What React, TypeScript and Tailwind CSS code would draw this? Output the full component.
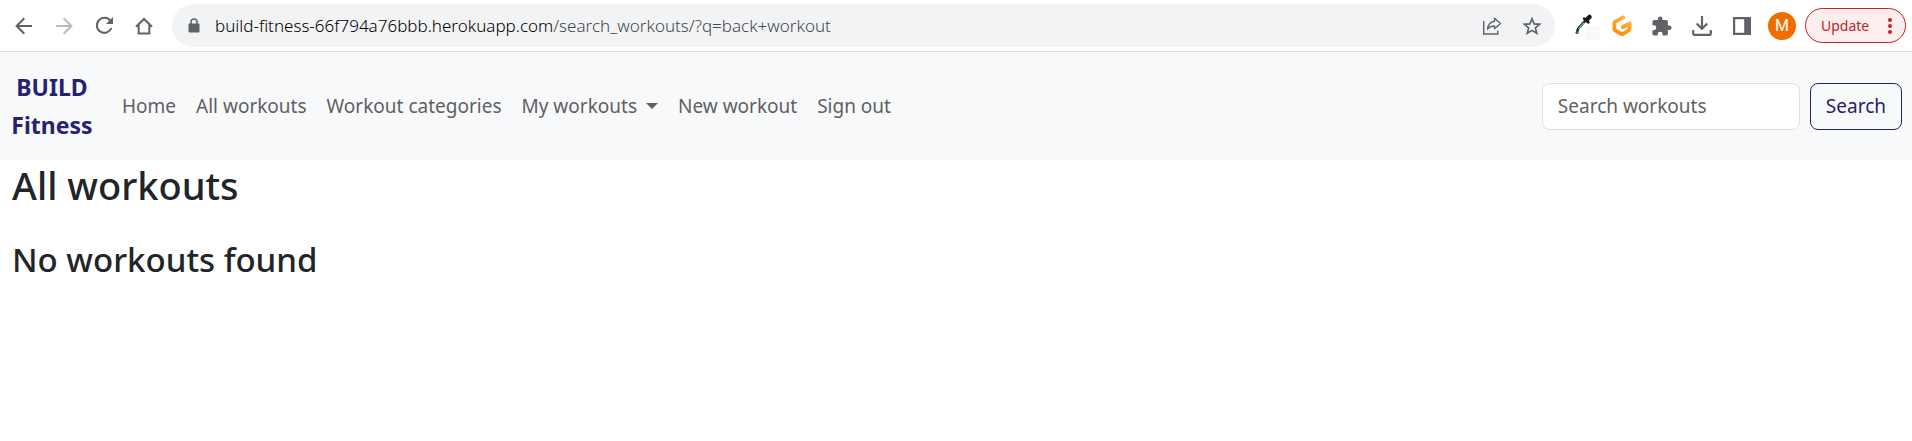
import React from 'react';

const navItems = ['Home', 'All workouts', 'Workout categories', 'My workouts', 'New workout', 'Sign out'];

function IconButton({ label, children }: { label: string; children: React.ReactNode }) {
  return (
    <button type="button" aria-label={label} className="flex h-10 w-10 shrink-0 items-center justify-center">
      {children}
    </button>
  );
}

function BrowserBar() {
  return (
    <header className="flex h-[52px] items-center border-b border-[#dadce0] bg-white pr-[6px] pl-1 text-[#5f6368]">
      <IconButton label="Back">
        <svg width="18" height="18" viewBox="0 0 18 18" fill="none" stroke="currentColor" strokeWidth="2">
          <path d="M17 9H2M9.300 1.300 1.600 9l7.700 7.700" />
        </svg>
      </IconButton>
      <IconButton label="Forward">
        <svg width="18" height="18" viewBox="0 0 18 18" fill="none" stroke="#babcbe" strokeWidth="2">
          <path d="M1 9h15M8.700 1.300 16.400 9l-7.700 7.700" />
        </svg>
      </IconButton>
      <IconButton label="Reload">
        <svg width="20" height="20" viewBox="0 0 20 20" fill="none" stroke="currentColor" strokeWidth="2">
          <path d="M16.500 5A7.500 7.500 0 1 0 17.400 12" />
          <path d="M19 1v7h-7z" fill="currentColor" stroke="none" />
        </svg>
      </IconButton>
      <IconButton label="Home page">
        <svg width="18" height="18" viewBox="0 0 18 18" fill="none" stroke="currentColor" strokeWidth="2">
          <path d="M1 9.800 9 2l8 7.800M3.700 8V16.500h10.600V8" />
        </svg>
      </IconButton>
      <div className="ml-2 flex h-[43px] min-w-0 flex-1 items-center rounded-full bg-[#f1f3f4] pr-[3px] pl-4">
        <svg width="12" height="15" viewBox="0 0 12 15" className="shrink-0">
          <path d="M3 6V4a3 3 0 0 1 6 0v2" fill="none" stroke="currentColor" strokeWidth="1.500" />
          <rect x="0.500" y="5.500" width="11" height="9" rx="1" fill="currentColor" />
        </svg>
        <p className="ml-[15px] min-w-0 flex-1 truncate text-[17px] font-light text-[#45484c]">
          <span className="text-black">build-fitness-66f794a76bbb.herokuapp.com</span>/search_workouts/?q=back+workout
        </p>
        <IconButton label="Share this page">
          <svg width="20" height="20" viewBox="0 0 20 20" fill="none" stroke="currentColor" strokeWidth="1.400">
            <path d="M1.700 5v13h14v-3.500" />
            <path d="M12.500 2.200 18.500 7.500l-6 5.300V10c-3.500 0-5.500 1-7 3.200.5-4.500 3-7.200 7-7.900z" strokeLinejoin="round" />
          </svg>
        </IconButton>
        <IconButton label="Bookmark this tab">
          <svg width="20" height="20" viewBox="0 0 20 20" fill="none" stroke="currentColor" strokeWidth="1.700">
            <path d="m10 2.800 2.100 5.100 5.500.4-4.200 3.600 1.300 5.400-4.700-2.900-4.700 2.900 1.300-5.400-4.200-3.600 5.500-.4z" />
          </svg>
        </IconButton>
      </div>
      <div className="ml-[7px] flex items-center">
        <IconButton label="Color picker">
          <svg width="36" height="28" viewBox="-10 0 36 28">
            <rect x="11" y="14" width="15" height="14" rx="2" fill="#f8f9fb" />
            <path d="m10.500 9.500-6.500 7.500-1 3.500" fill="none" stroke="#1d2b22" strokeWidth="2.600" strokeLinecap="round" />
            <path d="m10 10.500-5.500 6.500" stroke="#69b37b" strokeWidth="1.200" />
            <path d="m10 6.500 4.500 4" stroke="#15191b" strokeWidth="2.500" strokeLinecap="round" />
            <path d="m12.500 8 3-3" stroke="#15191b" strokeWidth="4.500" strokeLinecap="round" />
            <circle cx="3" cy="20.500" r="1.500" fill="#347849" />
          </svg>
        </IconButton>
        <IconButton label="Gitpod">
          <svg width="20" height="22" viewBox="0 0 20 22" fill="none">
            <defs>
              <linearGradient id="orange" x1="15" y1="2" x2="6" y2="21" gradientUnits="userSpaceOnUse">
                <stop stopColor="#ffb445" />
                <stop offset="1" stopColor="#ff8a00" />
              </linearGradient>
            </defs>
            <path d="M11.200 2.400 3.200 6.700a1.500 1.500 0 0 0-.8 1.300v6c0 .6.300 1 .8 1.300l6 3.500c.5.300 1.100.3 1.600 0l6-3.500c.5-.3.800-.7.800-1.300V8.300L10.800 12" stroke="url(#orange)" strokeWidth="3.800" strokeLinecap="round" strokeLinejoin="round" />
          </svg>
        </IconButton>
        <IconButton label="Extensions">
          <svg width="20" height="20" viewBox="1.500 0.500 22 22" fill="currentColor">
            <path d="M20.500 11H19V7a2 2 0 0 0-2-2h-4V3.500a2.500 2.500 0 0 0-5 0V5H4a2 2 0 0 0-2 2v3.800h1.500a2.700 2.700 0 0 1 0 5.400H2V20a2 2 0 0 0 2 2h3.800v-1.500a2.700 2.700 0 0 1 5.400 0V22H17a2 2 0 0 0 2-2v-4h1.500a2.500 2.500 0 0 0 0-5z" />
          </svg>
        </IconButton>
        <IconButton label="Downloads">
          <svg width="20" height="20" viewBox="0 0 20 20" fill="none" stroke="currentColor" strokeWidth="2.200">
            <path d="M10 0v12.500M4.700 7.500l5.300 5.300 5.300-5.300M1.200 14v3.700q0 1.200 1.200 1.200h15.200q1.200 0 1.200-1.200V14" />
          </svg>
        </IconButton>
        <IconButton label="Side panel">
          <svg width="18" height="18" viewBox="0 0 18 18" fill="currentColor">
            <path fillRule="evenodd" d="M0 0h18v18H0zM2.200 2.200v13.600h9V2.200z" />
          </svg>
        </IconButton>
        <IconButton label="Profile">
          <span className="flex h-7 w-7 items-center justify-center rounded-full bg-[#ef6c00] font-[Roboto,sans-serif] text-base text-white">M</span>
        </IconButton>
      </div>
      <button type="button" className="ml-[3px] flex h-[35px] w-[101px] shrink-0 items-center justify-between rounded-full border border-[#c5221f] bg-[#fceeee] pr-3 pl-[15px] text-[14px] text-[#c5221f]">
        Update
        <svg width="6" height="18" viewBox="0 0 6 18" fill="currentColor">
          <circle cx="3" cy="3" r="2" />
          <circle cx="3" cy="9" r="2" />
          <circle cx="3" cy="15" r="2" />
        </svg>
      </button>
    </header>
  );
}

function Navbar() {
  return (
    <nav className="flex items-center bg-[#f8f9fb] px-[10px] py-4 text-[19px]">
      <a href="#" className="w-[84px] text-center text-[23px] leading-[38px] font-bold text-[#27216f]">
        BUILD Fitness
      </a>
      <ul className="ml-[18px] flex flex-1 items-center text-[#5f6062]">
        {navItems.map((item) => (
          <li key={item}>
            <a href="#" className="flex items-center gap-[9px] px-[10px] py-2">
              {item}
              {item === 'My workouts' && (
                <svg width="12" height="6" viewBox="0 0 12 6" fill="currentColor">
                  <path d="M0 0h12L6 6z" />
                </svg>
              )}
            </a>
          </li>
        ))}
      </ul>
      <form className="flex gap-[10px]" onSubmit={(e) => e.preventDefault()}>
        <input
          type="search"
          aria-label="Search workouts"
          placeholder="Search workouts"
          className="h-[47px] w-[258px] rounded-lg border border-[#dee2e6] bg-white px-[15px] outline-none placeholder:text-[#5f6265]"
        />
        <button type="submit" className="h-[47px] rounded-lg border border-[#27216f] px-[15px] text-[#27216f]">
          Search
        </button>
      </form>
    </nav>
  );
}

export default function App() {
  return (
    <div className="min-h-screen bg-white font-['Noto_Sans',sans-serif]">
      <BrowserBar />
      <Navbar />
      <main className="px-3 text-[#212529]">
        <h1 className="text-[38px] leading-[50px] font-medium">All workouts</h1>
        <h2 className="mt-7 text-[33px] leading-[44px] font-medium">No workouts found</h2>
      </main>
    </div>
  );
}
